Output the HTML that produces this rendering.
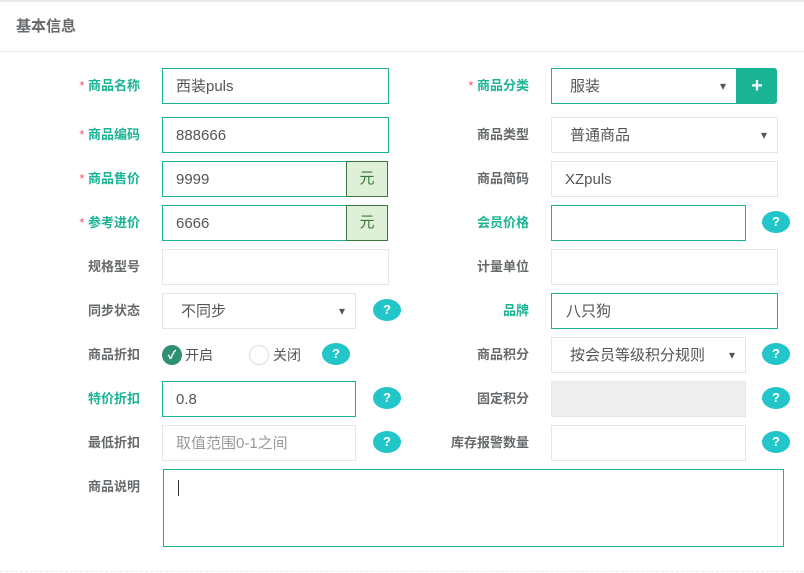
<!DOCTYPE html>
<html><head><meta charset="utf-8"><style>
*{margin:0;padding:0;box-sizing:border-box}
body{width:804px;height:573px;background:#fff;position:relative;overflow:hidden;font-family:"Liberation Sans","Noto Sans CJK SC",sans-serif;font-size:14px;color:#555}
.a{position:absolute}
.top{left:0;top:0;width:804px;height:2px;background:#e7eaec}
.title{left:16px;top:15px;font-size:15px;font-weight:bold;color:#676a6c}
.hr{left:0;top:51px;width:804px;height:1px;background:#e7eaec}
.lbl{position:absolute;width:140px;text-align:right;font-size:13px;font-weight:bold;color:#676a6c;line-height:36px}
.lbl.g{color:#1ab394}
.lbl i{color:#ed5565;font-style:normal;font-weight:normal}
.box{position:absolute;height:36px;border:1px solid #e5e6e7;background:#fff;padding-left:13px;line-height:36px;color:#555;font-size:15px}
.box.f{border-color:#1ab394}
.sel::after{content:"▾";position:absolute;right:10px;top:0;font-size:12px;color:#555;line-height:34px}
.add{position:absolute;height:36px;width:42px;background:#dff0d8;border:1px solid #3c763d;text-align:center;line-height:34px;color:#3c763d;font-size:15px}
.q{position:absolute;width:28px;height:22px;border-radius:50%;background:#23c6c8;color:#fff;font-weight:bold;font-size:13px;text-align:center;line-height:22px}
</style></head><body>
<div class="a top"></div>
<div class="a title">基本信息</div>
<div class="a hr"></div>

<div class="lbl g" style="left:0;top:68px"><i>*</i> 商品名称</div>
<div class="box f" style="left:162px;top:68px;width:227px">西装puls</div>
<div class="lbl g" style="left:389px;top:68px"><i>*</i> 商品分类</div>
<div class="box f sel" style="left:551px;top:68px;width:186px;padding-left:18px">服装</div>
<div class="a" style="left:737px;top:68px;width:40px;height:36px;background:#1ab394;border-radius:0 3px 3px 0;color:#fff;text-align:center;line-height:36px;font-size:20px;font-weight:bold">+</div>

<div class="lbl g" style="left:0;top:117px"><i>*</i> 商品编码</div>
<div class="box f" style="left:162px;top:117px;width:227px">888666</div>
<div class="lbl" style="left:389px;top:117px">商品类型</div>
<div class="box sel" style="left:551px;top:117px;width:227px;padding-left:18px">普通商品</div>

<div class="lbl g" style="left:0;top:161px"><i>*</i> 商品售价</div>
<div class="box f" style="left:162px;top:161px;width:185px">9999</div>
<div class="add" style="left:346px;top:161px">元</div>
<div class="lbl" style="left:389px;top:161px">商品简码</div>
<div class="box" style="left:551px;top:161px;width:227px">XZpuls</div>

<div class="lbl g" style="left:0;top:205px"><i>*</i> 参考进价</div>
<div class="box f" style="left:162px;top:205px;width:185px">6666</div>
<div class="add" style="left:346px;top:205px">元</div>
<div class="lbl g" style="left:389px;top:205px">会员价格</div>
<div class="box f" style="left:551px;top:205px;width:195px"></div>
<div class="q" style="left:762px;top:211px">?</div>

<div class="lbl" style="left:0;top:249px">规格型号</div>
<div class="box" style="left:162px;top:249px;width:227px"></div>
<div class="lbl" style="left:389px;top:249px">计量单位</div>
<div class="box" style="left:551px;top:249px;width:227px"></div>

<div class="lbl" style="left:0;top:293px">同步状态</div>
<div class="box sel" style="left:162px;top:293px;width:194px;padding-left:18px">不同步</div>
<div class="q" style="left:373px;top:299px">?</div>
<div class="lbl g" style="left:389px;top:293px">品牌</div>
<div class="box f" style="left:551px;top:293px;width:227px;padding-left:14px">八只狗</div>

<div class="lbl" style="left:0;top:337px">商品折扣</div>
<div class="a" style="left:162px;top:345px;width:20px;height:20px;border-radius:50%;background:#2f8f72;color:#fff;font-size:12px;text-align:center;line-height:20px;font-weight:bold">✓</div>
<div class="a" style="left:185px;top:345px;line-height:20px;font-size:14px;color:#555">开启</div>
<div class="a" style="left:249px;top:345px;width:20px;height:20px;border-radius:50%;border:1px solid #ddd;background:#fff"></div>
<div class="a" style="left:273px;top:345px;line-height:20px;font-size:14px;color:#555">关闭</div>
<div class="q" style="left:322px;top:343px">?</div>
<div class="lbl" style="left:389px;top:337px">商品积分</div>
<div class="box sel" style="left:551px;top:337px;width:195px;padding-left:18px">按会员等级积分规则</div>
<div class="q" style="left:762px;top:343px">?</div>

<div class="lbl g" style="left:0;top:381px">特价折扣</div>
<div class="box f" style="left:162px;top:381px;width:194px">0.8</div>
<div class="q" style="left:373px;top:387px">?</div>
<div class="lbl" style="left:389px;top:381px">固定积分</div>
<div class="box" style="left:551px;top:381px;width:195px;background:#eee"></div>
<div class="q" style="left:762px;top:387px">?</div>

<div class="lbl" style="left:0;top:425px">最低折扣</div>
<div class="box" style="left:162px;top:425px;width:194px;color:#999">取值范围0-1之间</div>
<div class="q" style="left:373px;top:431px">?</div>
<div class="lbl" style="left:389px;top:425px">库存报警数量</div>
<div class="box" style="left:551px;top:425px;width:195px"></div>
<div class="q" style="left:762px;top:431px">?</div>

<div class="lbl" style="left:0;top:469px">商品说明</div>
<div class="a" style="left:163px;top:469px;width:621px;height:78px;border:1px solid #1ab394"></div>
<div class="a" style="left:178px;top:480px;width:1px;height:16px;background:#333"></div>
<div class="a" style="left:0;top:571px;width:804px;height:0;border-top:1px dashed #e7eaec"></div>
</body></html>
